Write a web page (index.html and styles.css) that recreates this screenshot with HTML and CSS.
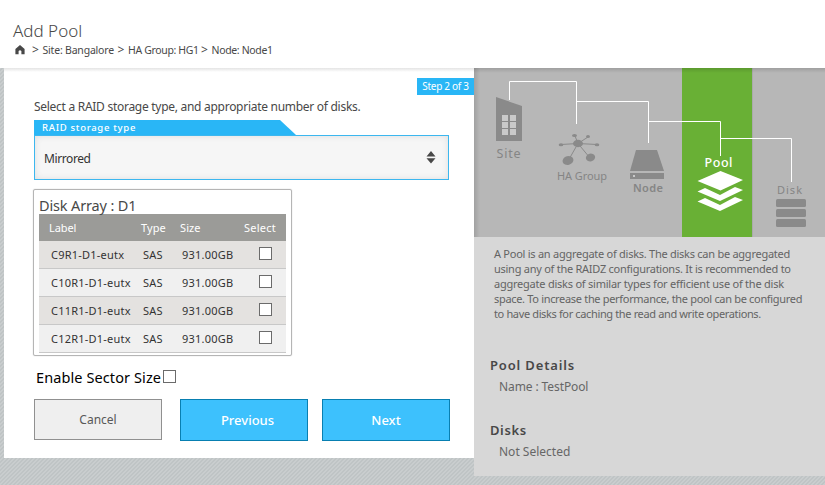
FILE: index.html
```html
<!DOCTYPE html>
<html lang="en">
<head>
<meta charset="utf-8">
<title>Add Pool</title>
<link rel="stylesheet" href="styles.css">
</head>
<body>
<header class="header">
  <h1 class="title">Add Pool</h1>
  <nav class="crumbs">
    <svg class="home" width="10" height="10" viewBox="0 0 10 10"><path d="M5 0 L9.6 4 V9.2 H6.4 V6 Q5 4.4 3.6 6 V9.2 H.4 V4Z" fill="#484848"/></svg>
    <b>&gt;</b><span class="c-site">Site: Bangalore</span><b>&gt;</b><span class="c-group">HA Group: HG1</span><b>&gt;</b><span class="c-node">Node: Node1</span>
  </nav>
</header>
<div class="page">
  <main class="main">
    <div class="step"><span>Step 2 of 3</span></div>
    <p class="intro">Select a RAID storage type, and appropriate number of disks.</p>
    <div class="tab"><span>RAID storage type</span></div>
    <div class="select"><span>Mirrored</span>
      <svg width="10" height="13" viewBox="0 0 10 13"><path d="M5 0 9.5 5.5H.5ZM.5 7.2H9.5L5 12.5Z" fill="#484848"/></svg>
    </div>
    <section class="array">
      <h2 class="array-title">Disk Array : D1</h2>
      <div class="row head"><span>Label</span><span>Type</span><span>Size</span><span>Select</span></div>
      <div class="row odd"><span>C9R1-D1-eutx</span><span>SAS</span><span>931.00GB</span><i class="box"></i></div>
      <div class="row"><span>C10R1-D1-eutx</span><span>SAS</span><span>931.00GB</span><i class="box"></i></div>
      <div class="row odd"><span>C11R1-D1-eutx</span><span>SAS</span><span>931.00GB</span><i class="box"></i></div>
      <div class="row"><span>C12R1-D1-eutx</span><span>SAS</span><span>931.00GB</span><i class="box"></i></div>
    </section>
    <div class="sector"><span>Enable Sector Size</span><i class="box"></i></div>
    <div class="actions">
      <div class="btn cancel">Cancel</div>
      <div class="btn previous">Previous</div>
      <div class="btn next">Next</div>
    </div>
  </main>
  <aside class="side">
    <svg class="diagram" width="351" height="169" viewBox="0 0 351 169">
      <defs>
        <linearGradient id="top" x2="0" y2="1"><stop offset="0" stop-opacity=".13"/><stop offset="1" stop-opacity="0"/></linearGradient>
        <linearGradient id="left"><stop offset="0" stop-opacity=".12"/><stop offset="1" stop-opacity="0"/></linearGradient>
      </defs>
      <rect width="351" height="169" fill="#b7b7b7"/>
      <rect x="208" width="70" height="169" fill="#69b035"/>
      <path d="M278.5 0V169" stroke="#aaa"/>
      <rect width="351" height="5" fill="url(#top)"/>
      <rect width="6" height="169" fill="url(#left)"/>
      <g fill="#8a8a8a">
        <path d="M22 29 48 38V73H22Z"/>
        <path d="M162 82H183L190 103H156Z"/><rect x="156" y="105" width="34" height="6"/>
        <rect x="302" y="131" width="30" height="8" rx="1.500"/><rect x="302" y="141" width="30" height="8" rx="1.500"/><rect x="302" y="151" width="30" height="8" rx="1.500"/>
        <ellipse cx="104" cy="75.500" rx="5" ry="3.700"/><ellipse cx="94" cy="92.500" rx="5.500" ry="4.300" transform="rotate(-15 94 92.500)"/><ellipse cx="116.500" cy="89.500" rx="4.700" ry="3.900" transform="rotate(-15 116.500 89.500)"/>
        <ellipse cx="87" cy="76.700" rx="2.300" ry="1.500"/><ellipse cx="123" cy="76.700" rx="2.300" ry="1.500"/><ellipse cx="100.500" cy="67.500" rx="2.500" ry="1.600"/><ellipse cx="114" cy="68.500" rx="2" ry="1.500"/>
      </g>
      <path d="M87 76.500 104 75.500 123 76.500M101 68 104 75.500 114 69M94 93 104 75.500 116 90" fill="none" stroke="#8a8a8a"/>
      <path d="M35.500 32V13.500H102.500V56M102.500 33.500H174.500V75M174.500 53.500H246.500V88M246.500 70.500H317.500V114" fill="none" stroke="#fff"/>
      <path d="M28 47h6v6h-6zM36 47h6v6h-6zM28 54h6v6h-6zM36 54h6v6h-6zM28 61h6v6h-6zM36 61h6v6h-6zM159 107h2v2h-2z" fill="#c9c9c9"/>
      <path d="M246.500 103 269 112 246.500 122.500 223.500 113ZM223.500 123.500 231 120 246 127 261 119 269 122 246 133ZM223.500 133.500 231 130 246 137 261 129 269 132 246 143Z" fill="#fff"/>
      <g class="labels">
        <text x="22.500" y="90" textLength="24" font-size="12.500">Site</text>
        <text x="83" y="112" textLength="50" font-size="11">HA Group</text>
        <text x="159" y="124" textLength="30" font-size="11" font-weight="600">Node</text>
        <text x="230.500" y="99" textLength="28" font-size="12.500" font-weight="500" class="active">Pool</text>
        <text x="303" y="126" textLength="25" font-size="11">Disk</text>
      </g>
    </svg>
    <p class="about"><span class="l1">A Pool is an aggregate of disks. The disks can be aggregated</span><span class="l2">using any of the RAIDZ configurations. It is recommended to</span><span class="l3">aggregate disks of similar types for efficient use of the disk</span><span class="l4">space. To increase the performance, the pool can be configured</span><span class="l5">to have disks for caching the read and write operations.</span></p>
    <h3 class="details">Pool Details</h3><p class="value name">Name : TestPool</p>
    <h3 class="disks">Disks</h3><p class="value none">Not Selected</p>
  </aside>
</div>
</body>
</html>
```
FILE: styles.css
```css
* { box-sizing: border-box; }
body { margin: 0; width: 825px; height: 485px; overflow: hidden; font-family: "Noto Sans", sans-serif; font-size: 12px; color: #484848; background: repeating-linear-gradient(135deg, #c9cdce 0 1.414px, #bfc4c5 1.414px 2.828px); }
h1, h2, h3, p { margin: 0; font-weight: 400; }
span { white-space: nowrap; }
.header { height: 68px; padding: 20px 0 0 13px; background: #fff; }
.title { height: 23px; font-size: 17px; line-height: 22px; letter-spacing: 0; font-weight: 300; }
.crumbs { display: flex; align-items: center; height: 14px; font-size: 10.500px; line-height: 14px; }
.home { margin: 0 7px 0 2px; }
.crumbs b { width: 10.500px; font-weight: 400; font-size: 12px; }
.crumbs span { letter-spacing: -.2px; }
.c-site { width: 75px; }
.c-group { width: 73px; }
.crumbs .c-group, .crumbs .c-node { letter-spacing: -.35px; }
.page { display: flex; align-items: flex-start; padding-left: 4px; }
.main { width: 470px; height: 390px; padding-left: 30px; background: linear-gradient(#e4e4e4, #fff 4px); }
.step { width: 57px; height: 17px; margin: 10px 0 0 383px; background: #29b6f6; color: #fff; font-size: 10px; line-height: 17px; text-align: center; letter-spacing: -.3px; }
.intro { height: 25px; line-height: 24px; letter-spacing: -.28px; }
.tab { width: 262px; height: 15px; padding-left: 8px; background: #29b6f6; color: #fff; clip-path: polygon(0 0, 246px 0, 262px 100%, 0 100%); font-size: 9.500px; font-weight: 500; line-height: 16px; letter-spacing: .7px; }
.select { display: flex; align-items: center; justify-content: space-between; width: 415px; height: 45px; padding: 2px 12px 0 9px; border: 1px solid #3cb7ef; background: #f6f6f6; box-shadow: inset 0 0 6px #ddd; letter-spacing: -.4px; color: #333; }
.select svg { margin-bottom: 3px; }
.array { width: 259px; height: 167px; margin: 9px 0 0 -1px; padding: 6px 5px 0; border: 1px solid #b5b5b5; border-radius: 2px; box-shadow: 0 0 1px #aaa; }
.array-title { height: 18px; font-size: 14.500px; line-height: 19px; letter-spacing: -.15px; }
.row { display: grid; grid-template-columns: 92px 39px 77px 1fr; align-items: center; height: 28px; padding-left: 12px; border-bottom: 1px solid #c8c8c8; background: #f0f0f0; font-size: 11px; color: #333; }
.row span { letter-spacing: .22px; }
.odd { background: #e4e2e0; }
.head { height: 27px; padding: 0 0 0 10px; border: 0; background: #9b9b98; }
.head span { color: #fff; letter-spacing: .1px; }
.head span:first-child { letter-spacing: -.1px; }
.head span:last-child { margin-left: -13px; letter-spacing: .25px; }
.box { display: block; width: 13px; height: 13px; border: 1px solid #6b6b6b; background: #fff; }
.array .box { margin-bottom: 2px; }
.sector { display: flex; align-items: center; height: 43px; padding: 0 0 1px 2px; color: #000; }
.sector span { width: 127px; font-size: 14.500px; letter-spacing: .1px; }
.sector .box { margin-bottom: 2px; }
.actions { display: flex; align-items: flex-start; }
.btn { width: 128px; height: 42px; border: 1px solid #087fb1; background: #3dc1fd; color: #fff; line-height: 41px; text-align: center; font-size: 13px; font-weight: 500; }
.btn.cancel { height: 41px; margin-right: 18px; border-color: #909090; background: #efefef; color: #585858; font-size: 12px; font-weight: 400; line-height: 39px; }
.previous { margin-right: 14px; padding-left: 7px; }
.side { width: 351px; height: 408px; background: #d7d7d7; }
.diagram { display: block; }
.labels { font-family: "Noto Sans", sans-serif; fill: #858585; }
.labels .active { fill: #fff; }
.about { height: 85px; padding: 9px 0 0 20px; font-size: 11px; line-height: 15px; color: #646464; }
.about span { display: block; letter-spacing: -.26px; }
.about .l3 { letter-spacing: -.23px; }
.about .l4 { letter-spacing: -.32px; }
.about .l5 { letter-spacing: -.36px; }
.side h3 { height: 20px; margin: 33px 0 0 16px; font-size: 13px; font-weight: 600; line-height: 20px; letter-spacing: .85px; }
.side .disks { margin-top: 23px; letter-spacing: .6px; }
.value { height: 22px; padding-left: 25px; font-size: 12px; line-height: 23px; letter-spacing: -.1px; color: #666; }
.value.none { letter-spacing: 0; }
```
